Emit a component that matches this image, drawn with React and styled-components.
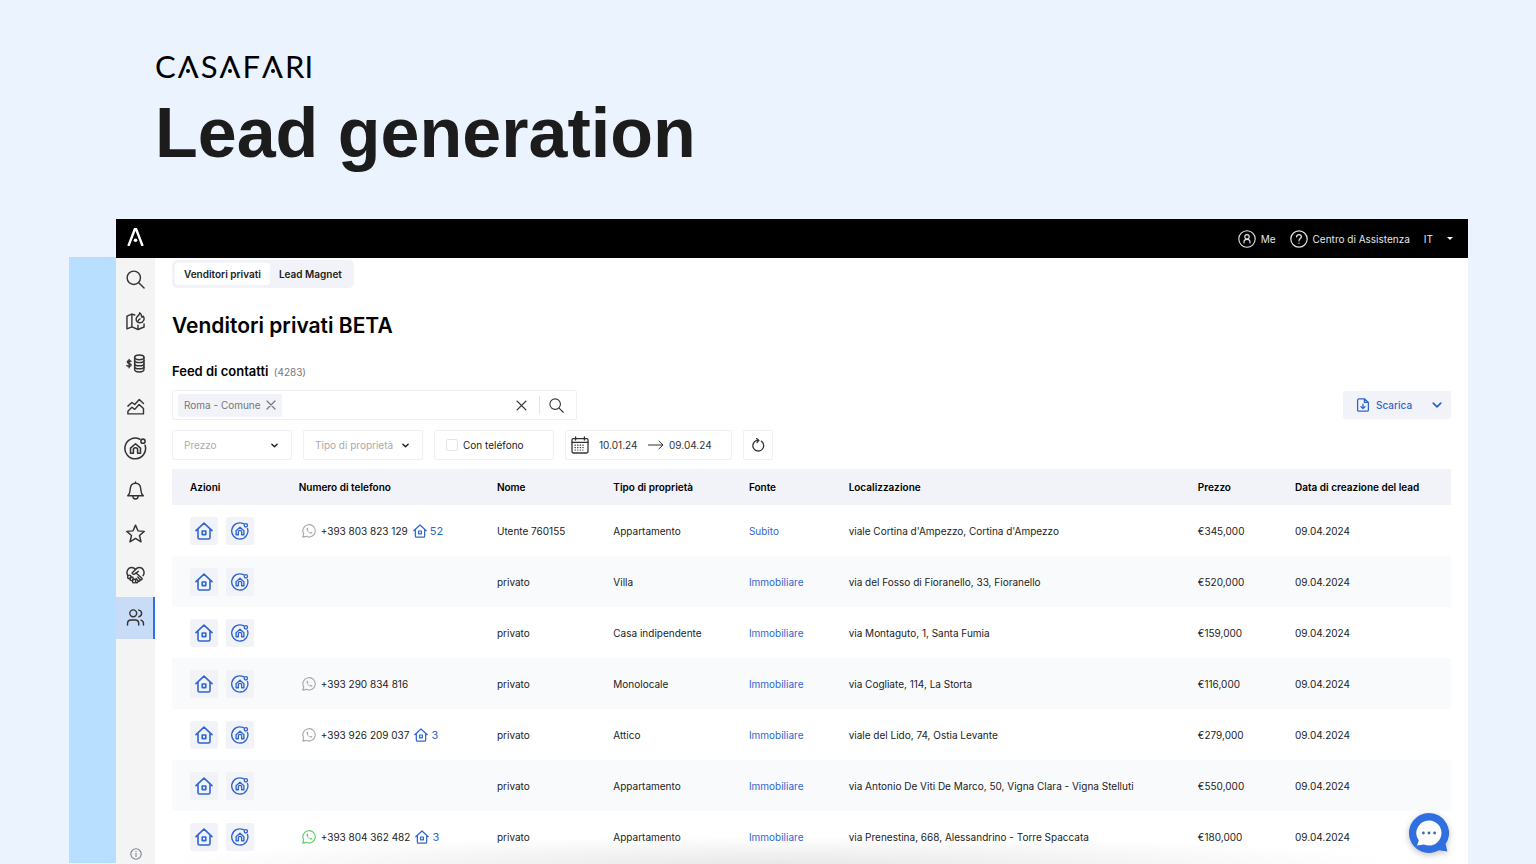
import React from 'react';
import styled, { createGlobalStyle } from 'styled-components';

const tabs = ['Venditori privati', 'Lead Magnet'];

const columns = [
    { label: 'Azioni', width: '8.5%' },
    { label: 'Numero di telefono', width: '15.5%' },
    { label: 'Nome', width: '9.1%' },
    { label: 'Tipo di proprietà', width: '10.6%' },
    { label: 'Fonte', width: '7.8%' },
    { label: 'Localizzazione', width: '27.3%' },
    { label: 'Prezzo', width: '7.6%' },
    { label: 'Data di creazione del lead', width: '13.6%' },
];

const leads = [
    { id: 1, phone: '+393 803 823 129', homes: 52, name: 'Utente 760155', type: 'Appartamento', source: 'Subito', place: "viale Cortina d'Ampezzo, Cortina d'Ampezzo", price: '€345,000' },
    { id: 2, name: 'privato', type: 'Villa', source: 'Immobiliare', place: 'via del Fosso di Fioranello, 33, Fioranello', price: '€520,000' },
    { id: 3, name: 'privato', type: 'Casa indipendente', source: 'Immobiliare', place: 'via Montaguto, 1, Santa Fumia', price: '€159,000' },
    { id: 4, phone: '+393 290 834 816', name: 'privato', type: 'Monolocale', source: 'Immobiliare', place: 'via Cogliate, 114, La Storta', price: '€116,000' },
    { id: 5, phone: '+393 926 209 037', homes: 3, name: 'privato', type: 'Attico', source: 'Immobiliare', place: 'viale del Lido, 74, Ostia Levante', price: '€279,000' },
    { id: 6, name: 'privato', type: 'Appartamento', source: 'Immobiliare', place: 'via Antonio De Viti De Marco, 50, Vigna Clara - Vigna Stelluti', price: '€550,000' },
    { id: 7, phone: '+393 804 362 482', homes: 3, active: true, name: 'privato', type: 'Appartamento', source: 'Immobiliare', place: 'via Prenestina, 668, Alessandrino - Torre Spaccata', price: '€180,000' },
];

const Icon = ({ size = 19, box = 20, width = 1.5, children }) => (
    <svg width={size} height={size} viewBox={`0 0 ${box} ${box}`} fill="none" stroke="currentColor"
        strokeWidth={width} strokeLinecap="round" strokeLinejoin="round" aria-hidden="true">
        {children}
    </svg>
);

const SearchIcon = ({ size }) => (
    <Icon size={size}>
        <circle cx="8.2" cy="8.2" r="7" />
        <path d="M13.4 13.4L19 19" />
    </Icon>
);

const MapIcon = () => (
    <Icon>
        <path d="M9.2 3.2L6.2 2.2L1 4.4V17.8L6.2 15.6L12.6 18.4L19 15.8V12.6" />
        <path d="M6.2 2.4V15.4M12.6 14V18.2" />
        <path d="M14.4 0.8C14.6 3 12.6 3.8 11.4 5.4C9.8 7.8 11.2 11.4 14.6 11.4C18.6 11.4 20 7.2 18.2 4.4C17.6 5.4 17 5.6 16.4 5.2C16.6 3.4 16 1.8 14.4 0.8Z" />
        <path d="M12.8 9.4C13 8.4 13.8 7.8 14.8 7.2" />
    </Icon>
);

const MoneyIcon = () => (
    <Icon>
        <path d="M5.2 7.8C4.6 6.9 1.5 6.8 1.4 8.5C1.4 10.4 5.4 9.6 5.4 11.6C5.3 13.4 1.8 13.3 1 12.2M3.3 5.8V14.6" />
        <ellipse cx="14" cy="3.5" rx="4.9" ry="2.5" />
        <path d="M9.1 3.5V16.4C9.1 19.8 18.9 19.8 18.9 16.4V3.5" />
        <path d="M9.1 7C9.5 9.8 18.5 9.8 18.9 7M9.1 10.3C9.5 13.1 18.5 13.1 18.9 10.3M9.1 13.5C9.5 16.3 18.5 16.3 18.9 13.5" />
    </Icon>
);

const ChartIcon = () => (
    <Icon>
        <path d="M2 9.6L6.2 5.8L9.2 7.8L14 2.6L18.4 6.8" />
        <path d="M2 17.8V15L6.2 10.8L9.2 13L13.8 7.8L18.4 12.2V17.8Z" />
    </Icon>
);

const RadarHomeIcon = ({ size = 24, width = 1.6 }) => (
    <Icon size={size} box={24} width={width}>
        <path d="M22 8.6A10.8 10.8 0 1 1 16.6 2.3" />
        <circle cx="19.8" cy="4.4" r="2.2" />
        <path d="M6.8 11.6L12 7L17.2 11.6V17H14.2V13.4A2.2 2.2 0 0 0 9.8 13.4V17H6.8Z" />
    </Icon>
);

const BellIcon = () => (
    <Icon>
        <path d="M10 0.9V2.2M1.8 15.6C4.4 13.6 4.2 11.6 4.4 8.6C4.6 4.8 6.6 2.4 10 2.4C13.4 2.4 15.4 4.8 15.6 8.6C15.8 11.6 15.6 13.6 18.2 15.6Z" />
        <path d="M7.2 15.8C7.2 20 12.8 20 12.8 15.8" />
    </Icon>
);

const StarIcon = () => (
    <Icon>
        <path d="M10 1.2L12.6 7.2L19.2 7.8L14.2 12.1L15.8 18.7L10 15.2L4.2 18.7L5.8 12.1L0.8 7.8L7.4 7.2Z" />
    </Icon>
);

const HandshakeIcon = () => (
    <Icon>
        <path d="M2 10.2C-0.4 6.4 2 1.6 6 1.6C7.8 1.6 9 2.4 10 3.6C11 2.4 12.2 1.6 14 1.6C18 1.6 20.4 6.4 18 10.2" />
        <path d="M10 3.6L6.4 7.4C7.2 9.4 9.2 9 10.6 7.4L17 13.2C16.8 14.6 15.8 14.8 15 14.4C14.8 15.8 13.8 16.4 12.8 15.8C12.6 17.4 11.4 18.2 10.2 17.4" />
        <path d="M12.4 11.6L15 14.4M10.6 13.2L12.8 15.8M10.6 7.4L13 5.6" />
        <rect x="1.8" y="9.6" width="3.4" height="3.8" rx="1.6" />
        <rect x="4.2" y="11.6" width="3.4" height="3.8" rx="1.6" />
        <rect x="6.8" y="14" width="3.4" height="3.8" rx="1.6" />
    </Icon>
);

const PeopleIcon = () => (
    <Icon>
        <circle cx="7.6" cy="5.6" r="3.6" />
        <path d="M1.6 18V16.4C1.6 14 3.4 12.6 5.4 12.6H9.6C11.8 12.6 13.4 14 13.4 16.4V18" />
        <path d="M13.4 2.2C17.4 2.8 17.4 8.4 13.6 9.2M15.8 12.8C17.6 13.4 18.4 14.6 18.4 16.4V18" />
    </Icon>
);

const HomeIcon = ({ size = 18 }) => (
    <Icon size={size} box={18} width={1.6}>
        <path d="M1 8.6L9 1.2L17 8.6M3 7.2V15.4C3 16.4 3.6 17 4.6 17H13.4C14.4 17 15 16.4 15 15.4V7.2" />
        <rect x="7.2" y="9" width="3.6" height="3.6" />
    </Icon>
);

const WhatsappIcon = () => (
    <Icon size={14} box={14} width={1.2}>
        <path d="M0.8 13.2L1.7 9.9A6.2 6.2 0 1 1 4.2 12.3Z" />
        <path d="M4.6 4.1C4.2 7 7 9.9 9.8 9.6C10.5 9.4 10.5 8.8 10.2 8.4L8.9 7.8L8.1 8.5C7 8.1 6.2 7.3 5.8 6.2L6.4 5.4L5.9 4C5.4 3.7 4.9 3.7 4.6 4.1Z" fill="currentColor" stroke="none" />
    </Icon>
);

const CloseIcon = ({ size }) => (
    <Icon size={size} box={10} width={1.2}>
        <path d="M1 1L9 9M9 1L1 9" />
    </Icon>
);

const ChevronIcon = ({ size = 7, width = 1.6 }) => (
    <Icon size={size} box={8} width={width}>
        <path d="M1 2.5L4 5.5L7 2.5" />
    </Icon>
);

const CalendarIcon = () => (
    <Icon size={18} box={18} width={1.3}>
        <rect x="1" y="2.6" width="16" height="14.4" rx="1.4" />
        <path d="M1 6.4H17M4.6 0.8V4M13.4 0.8V4" />
        <path d="M4 9.2H14.4M4 11.6H14.4M4 14H12" strokeWidth="1.2" strokeDasharray="0.4 2.2" />
    </Icon>
);

const ArrowIcon = () => (
    <svg width="16" height="10" viewBox="0 0 16 10" fill="none" stroke="currentColor" strokeWidth="1" aria-hidden="true">
        <path d="M0 5H15M10.6 0.8L15 5L10.6 9.2" />
    </svg>
);

const ReloadIcon = () => (
    <Icon size={14} box={14} width={1.3}>
        <path d="M10.4 3.2A5.4 5.4 0 1 1 5.8 2.4H7.6" />
        <path d="M5.6 0.6L7.8 2.4L6 4.6" />
    </Icon>
);

const DownloadIcon = () => (
    <Icon size={14} box={14} width={1.3}>
        <path d="M8.4 0.8H3C2.2 0.8 1.6 1.3 1.6 2V12C1.6 12.7 2.2 13.2 3 13.2H11C11.8 13.2 12.4 12.7 12.4 12V4.4L8.4 0.8V4.4H12.4" />
        <path d="M7 6.2V10.6M5 8.8L7 10.6L9 8.8" />
    </Icon>
);

const UserIcon = () => (
    <Icon size={18} box={18} width={1.1}>
        <circle cx="9" cy="9" r="8.2" />
        <circle cx="9" cy="6.8" r="2.2" />
        <path d="M6 13V11.8C6 8.6 12 8.6 12 11.8V13" />
    </Icon>
);

const HelpIcon = () => (
    <Icon size={18} box={18} width={1.2}>
        <circle cx="9" cy="9" r="8.2" />
        <path d="M6.6 6.8C6.8 3.8 11.6 4 11.4 6.9C11.2 8.6 9 8.6 9 10.8M9 13V13.2" />
    </Icon>
);

const InfoIcon = () => (
    <Icon size={12} box={12} width={1.1}>
        <circle cx="6" cy="6" r="5.2" />
        <path d="M6 5.4V8.6M6 3.4V3.5" />
    </Icon>
);

const BrandMark = () => (
    <svg width="17" height="18" viewBox="0 0 17 18" fill="none" stroke="#fff" strokeWidth="2.4" aria-hidden="true">
        <path d="M1.4 18L7.8 1.2H9.2L15.6 18" />
        <circle cx="8.5" cy="12.2" r="1.8" fill="#fff" stroke="none" />
    </svg>
);

const ChatIcon = () => (
    <svg width="40" height="40" viewBox="0 0 40 40" aria-hidden="true">
        <path d="M20 0A20 20 0 1 0 30 37.3L38.4 38.6L36.6 31A20 20 0 0 0 20 0Z" fill="#2f6fe0" />
        <path d="M20 7.4A12.6 12.6 0 1 1 15 31.6L8 32.4L9.8 27.4A12.6 12.6 0 0 1 20 7.4Z" fill="#fff" />
        <circle cx="14.4" cy="20" r="1.4" fill="#3b6aa8" />
        <circle cx="20" cy="20" r="1.4" fill="#3b6aa8" />
        <circle cx="25.6" cy="20" r="1.4" fill="#3b6aa8" />
    </svg>
);

const menu = [
    { label: 'Cerca', icon: <SearchIcon /> },
    { label: 'Mappa', icon: <MapIcon /> },
    { label: 'Valutazione', icon: <MoneyIcon /> },
    { label: 'Mercato', icon: <ChartIcon /> },
    { label: 'Immobili', icon: <RadarHomeIcon size={23} /> },
    { label: 'Avvisi', icon: <BellIcon /> },
    { label: 'Preferiti', icon: <StarIcon /> },
    { label: 'Collaborazioni', icon: <HandshakeIcon /> },
    { label: 'Contatti', icon: <PeopleIcon />, active: true },
];

const Lead = ({ lead }) => {
    return (
        <Row>
            <td>
                <Actions>
                    <ActionBtn aria-label="Apri immobile"><HomeIcon /></ActionBtn>
                    <ActionBtn aria-label="Cerca simili"><RadarHomeIcon size={18} width={1.8} /></ActionBtn>
                </Actions>
            </td>
            <td>
                {lead.phone && (
                    <Phone $active={lead.active}>
                        <WhatsappIcon />
                        <span>{lead.phone}</span>
                        {lead.homes && <Homes href="#"><HomeIcon size={14} />{lead.homes}</Homes>}
                    </Phone>
                )}
            </td>
            <td>{lead.name}</td>
            <td>{lead.type}</td>
            <td><Source href="#">{lead.source}</Source></td>
            <td>{lead.place}</td>
            <td>{lead.price}</td>
            <td>09.04.2024</td>
        </Row>
    );
}

const App = () => {
    return (
        <>
            <GlobalStyle />
            <Page>
                <Hero>
                    <Wordmark aria-label="CASAFARI">C<Peak>Λ</Peak>S<Peak>Λ</Peak>F<Peak>Λ</Peak>RI</Wordmark>
                    <HeroTitle>Lead generation</HeroTitle>
                </Hero>
                <Stage>
                    <Strip />
                    <Panel>
                        <TopBar>
                            <BrandLink href="#" aria-label="Casafari"><BrandMark /></BrandLink>
                            <TopNav>
                                <TopLink href="#"><UserIcon />Me</TopLink>
                                <TopLink href="#"><HelpIcon />Centro di Assistenza</TopLink>
                                <LangBtn>IT<Caret /></LangBtn>
                            </TopNav>
                        </TopBar>
                        <Body>
                            <Sidebar>
                                <Menu>
                                    {menu.map((item) => (
                                        <MenuLink key={item.label} href="#" aria-label={item.label} $active={item.active}>{item.icon}</MenuLink>
                                    ))}
                                </Menu>
                                <InfoBtn aria-label="Info"><InfoIcon /></InfoBtn>
                            </Sidebar>
                            <Main>
                                <Tabs>
                                    {tabs.map((tab, i) => <Tab key={tab} $active={i === 0}>{tab}</Tab>)}
                                </Tabs>
                                <Title>Venditori privati BETA</Title>
                                <Feed>Feed di contatti <Count>(4283)</Count></Feed>
                                <Toolbar>
                                    <SearchBox>
                                        <Tag>Roma - Comune<PlainBtn aria-label="Rimuovi"><CloseIcon size={10} /></PlainBtn></Tag>
                                        <SearchInput aria-label="Località" />
                                        <PlainBtn $dark aria-label="Cancella"><CloseIcon size={11} /></PlainBtn>
                                        <Divider />
                                        <PlainBtn $dark aria-label="Cerca"><SearchIcon size={15} /></PlainBtn>
                                    </SearchBox>
                                    <DownloadBtn><DownloadIcon />Scarica<Push><ChevronIcon size={10} width={1.4} /></Push></DownloadBtn>
                                </Toolbar>
                                <Filters>
                                    <SelectBox>
                                        <Select aria-label="Prezzo"><option>Prezzo</option></Select>
                                        <ChevronIcon />
                                    </SelectBox>
                                    <SelectBox>
                                        <Select aria-label="Tipo di proprietà"><option>Tipo di proprietà</option></Select>
                                        <ChevronIcon />
                                    </SelectBox>
                                    <CheckLabel><Checkbox type="checkbox" />Con teléfono</CheckLabel>
                                    <Dates>
                                        <CalendarIcon />
                                        <DateInput aria-label="Dal" defaultValue="10.01.24" />
                                        <ArrowIcon />
                                        <DateInput aria-label="Al" defaultValue="09.04.24" />
                                    </Dates>
                                    <ReloadBtn aria-label="Ripristina"><ReloadIcon /></ReloadBtn>
                                </Filters>
                                <Table>
                                    <colgroup>
                                        {columns.map((col) => <Col key={col.label} $width={col.width} />)}
                                    </colgroup>
                                    <thead>
                                        <tr>{columns.map((col) => <th key={col.label}>{col.label}</th>)}</tr>
                                    </thead>
                                    <tbody>
                                        {leads.map((lead) => <Lead key={lead.id} lead={lead} />)}
                                    </tbody>
                                </Table>
                            </Main>
                        </Body>
                        <BottomShade />
                        <ChatBtn aria-label="Chat"><ChatIcon /></ChatBtn>
                    </Panel>
                </Stage>
            </Page>
        </>
    );
}

export default App

const GlobalStyle = createGlobalStyle`
    * {
        box-sizing:border-box;
    }
    body {
        margin:0;
        background-color:#ebf3fe;
        color:#1c1c1c;
        font:400 10px/16px Inter, "Liberation Sans", sans-serif;
    }
    button, input, select {
        padding:0;
        border:none;
        background:none;
        color:inherit;
        font:inherit;
    }
    button {
        cursor:pointer;
    }
    a {
        color:inherit;
        text-decoration:none;
    }
    svg {
        display:block;
        flex:none;
    }
`;

const Page = styled.div`
    display:flex;
    flex-direction:column;
    min-height:100vh;
`;

const Hero = styled.header`
    padding:48px 155px 37px;
`;

const Wordmark = styled.div`
    color:#000;
    font:400 31px/36px Lato, sans-serif;
`;

const Peak = styled.span`
    position:relative;
    display:inline-block;
    margin:0 2px;

    &::after {
        content:'';
        position:absolute;
        left:50%;
        bottom:11px;
        width:4px;
        height:4px;
        margin-left:-2px;
        border-radius:50%;
        background-color:#000;
    }
`;

const HeroTitle = styled.h1`
    margin:0;
    color:#1c1c1c;
    font:700 70px/98px "Liberation Sans", sans-serif;
`;

const Stage = styled.div`
    display:flex;
    flex:1;
    padding:0 68px 0 69px;
`;

const Strip = styled.div`
    flex:none;
    width:47px;
    margin:38px 0 1px;
    background-color:#b8dfff;
`;

const Panel = styled.div`
    position:relative;
    display:flex;
    flex:1;
    flex-direction:column;
    min-width:0;
    background-color:#fff;
`;

const TopBar = styled.div`
    display:flex;
    align-items:center;
    justify-content:space-between;
    height:39px;
    padding:0 15px 0 11px;
    background-color:#000;
    color:#e6e6e6;
`;

const BrandLink = styled.a`
    display:block;
    padding-bottom:3px;
`;

const TopNav = styled.nav`
    display:flex;
    align-items:center;
    gap:14px;
`;

const TopLink = styled.a`
    display:flex;
    align-items:center;
    gap:5px;
`;

const LangBtn = styled.button`
    display:flex;
    align-items:center;
    gap:14px;
`;

const Caret = styled.span`
    border:3px solid transparent;
    border-top-color:#fff;
    border-bottom:0;
`;

const Body = styled.div`
    display:flex;
    flex:1;
`;

const Sidebar = styled.aside`
    display:flex;
    flex:none;
    flex-direction:column;
    align-items:center;
    justify-content:space-between;
    width:39px;
    padding-bottom:4px;
    background-color:#f4f4f4;
    color:#333;
`;

const Menu = styled.nav`
    display:grid;
    grid-auto-rows:1fr;
    width:100%;
    height:381px;
`;

const MenuLink = styled.a`
    display:flex;
    align-items:center;
    justify-content:center;
    background-color:${({ $active }) => $active ? '#c8dcf8' : 'transparent'};
    box-shadow:${({ $active }) => $active ? 'inset -2px 0 #2f6fe0' : 'none'};
`;

const InfoBtn = styled.button`
    color:#7d8597;
`;

const Main = styled.main`
    flex:1;
    min-width:0;
    padding:2px 17px 0;
`;

const Tabs = styled.div`
    display:inline-flex;
    padding:3px;
    border-radius:5px;
    background-color:#f2f3f8;
`;

const Tab = styled.button`
    height:22px;
    padding:0 9px;
    border-radius:3px;
    background-color:${({ $active }) => $active ? '#fff' : 'transparent'};
    font-weight:600;
`;

const Title = styled.h2`
    margin:23px 0 0;
    color:#000;
    font-size:21px;
    line-height:30px;
    font-weight:600;
`;

const Feed = styled.h3`
    margin:20px 0 0;
    color:#000;
    font-size:13px;
    line-height:20px;
    font-weight:600;
`;

const Count = styled.span`
    margin-left:2px;
    color:#777;
    font-size:10px;
    font-weight:400;
`;

const Toolbar = styled.div`
    display:flex;
    align-items:center;
    justify-content:space-between;
    margin-top:8px;
`;

const SearchBox = styled.div`
    display:flex;
    align-items:center;
    width:405px;
    height:30px;
    padding:0 12px 0 5px;
    border:1px solid #eff0f6;
    border-radius:2px;
`;

const Tag = styled.span`
    display:flex;
    align-items:center;
    gap:5px;
    height:23px;
    padding:0 6px;
    border-radius:2px;
    background-color:#f2f3f8;
    color:#757575;
`;

const SearchInput = styled.input`
    flex:1;
    min-width:0;
    height:24px;
    outline:none;
`;

const PlainBtn = styled.button`
    color:${({ $dark }) => $dark ? '#333' : '#777'};
`;

const Divider = styled.span`
    width:1px;
    height:18px;
    margin:0 9px 0 12px;
    background-color:#e2e4ec;
`;

const DownloadBtn = styled.button`
    display:flex;
    align-items:center;
    gap:6px;
    width:108px;
    height:28px;
    padding:0 9px 0 13px;
    border-radius:2px;
    background-color:#f2f3f8;
    color:#2f66d0;
    font-weight:500;
`;

const Push = styled.span`
    margin-left:auto;
`;

const Filters = styled.div`
    display:flex;
    gap:11px;
    margin-top:10px;
`;

const SelectBox = styled.div`
    display:flex;
    align-items:center;
    justify-content:space-between;
    width:120px;
    height:30px;
    padding:0 13px 0 11px;
    border:1px solid #eff0f6;
    border-radius:2px;
`;

const Select = styled.select`
    flex:1;
    min-width:0;
    appearance:none;
    color:#aaa;
`;

const CheckLabel = styled.label`
    display:flex;
    align-items:center;
    gap:5px;
    width:120px;
    height:30px;
    padding:0 11px;
    border:1px solid #eff0f6;
    border-radius:2px;
`;

const Checkbox = styled.input`
    width:12px;
    height:12px;
    margin:0;
    appearance:none;
    border:1px solid #e2e4ec;
    border-radius:2px;
`;

const Dates = styled.div`
    display:flex;
    align-items:center;
    gap:5px;
    width:167px;
    height:30px;
    padding:0 5px;
    border:1px solid #eff0f6;
    border-radius:2px;
    color:#333;

    > svg:first-child {
        margin-right:5px;
    }
`;

const DateInput = styled.input`
    width:44px;
`;

const ReloadBtn = styled.button`
    display:flex;
    align-items:center;
    justify-content:center;
    width:30px;
    height:30px;
    border:1px solid #eff0f6;
    border-radius:2px;
    color:#333;
`;

const Table = styled.table`
    width:100%;
    margin-top:9px;
    table-layout:fixed;
    border-collapse:collapse;

    th, td {
        padding:0 0 0 18px;
        text-align:left;
        white-space:nowrap;
    }

    th {
        height:36px;
        background-color:#f2f3f8;
        color:#000;
        font-weight:600;
    }
`;

const Col = styled.col`
    width:${({ $width }) => $width};
`;

const Row = styled.tr`
    height:51px;

    &:nth-child(even) {
        background-color:#f9fafc;
    }
`;

const Actions = styled.div`
    display:flex;
    gap:8px;
`;

const ActionBtn = styled.button`
    display:flex;
    align-items:center;
    justify-content:center;
    width:28px;
    height:28px;
    border-radius:2px;
    background-color:#f2f3f8;
    color:#2f66d0;
`;

const Phone = styled.div`
    display:flex;
    align-items:center;
    gap:5px;
    padding-left:3px;

    > svg {
        color:${({ $active }) => $active ? '#5fce6c' : '#aaa'};
    }
`;

const Homes = styled.a`
    display:flex;
    align-items:center;
    gap:3px;
    color:#2f66d0;
    font-size:11px;
`;

const Source = styled.a`
    color:#2f66d0;
`;

const BottomShade = styled.div`
    position:absolute;
    right:60px;
    bottom:0;
    left:39px;
    height:28px;
    background:radial-gradient(ellipse at bottom, rgba(0, 0, 0, 0.09), transparent 70%);
    pointer-events:none;
`;

const ChatBtn = styled.button`
    position:absolute;
    right:19px;
    bottom:11px;
    filter:drop-shadow(0 2px 3px rgba(0, 0, 0, 0.25));
`;
